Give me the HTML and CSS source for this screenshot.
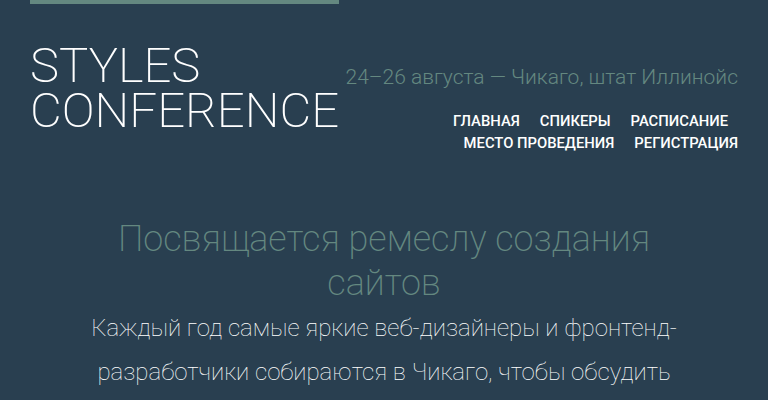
FILE: index.html
```html
<!DOCTYPE html>
<html lang="ru">
<head>
<meta charset="utf-8">
<title>Styles Conference</title>
<link rel="stylesheet" href="styles.css">
</head>
<body>
<header class="primary-header">
  <div class="container header-row">
    <h1 class="logo">STYLES<br>CONFERENCE</h1>
    <div class="header-right">
      <h3 class="tagline">24–26 августа — Чикаго, штат Иллинойс</h3>
      <nav class="nav">
        <ul class="nav-list">
          <li><a href="#">ГЛАВНАЯ</a></li>
          <li><a href="#">СПИКЕРЫ</a></li>
          <li><a href="#">РАСПИСАНИЕ</a></li>
          <li><a href="#">МЕСТО ПРОВЕДЕНИЯ</a></li>
          <li><a href="#">РЕГИСТРАЦИЯ</a></li>
        </ul>
      </nav>
    </div>
  </div>
</header>
<section class="hero">
  <div class="container">
    <h2 class="hero-title">Посвящается ремеслу создания сайтов</h2>
    <p class="hero-lead">Каждый год самые яркие веб-дизайнеры и фронтенд-разработчики собираются в Чикаго, чтобы обсудить</p>
  </div>
</section>
</body>
</html>
```
FILE: styles.css
```css
html, body {
  margin: 0;
  padding: 0;
}
body {
  background: #293f50;
  color: #888;
  font-family: Roboto, "Noto Sans", sans-serif;
  font-weight: 300;
}
.container {
  padding: 0 30px;
}
.header-row {
  display: flex;
  justify-content: space-between;
  align-items: flex-start;
}
.logo {
  margin: 0;
  border-top: 4px solid #648880;
  padding-top: 39px;
  color: #fff;
  font-size: 49px;
  line-height: 45px;
  font-weight: 200;
}
.header-right {
  padding-top: 66px;
  text-align: right;
}
.tagline {
  margin: 0;
  color: #648880;
  font-size: 21px;
  line-height: 22px;
  font-weight: 300;
}
.nav-list {
  list-style: none;
  margin: 22px 0 0 0;
  padding: 0;
  font-size: 0;
}
.nav-list li {
  display: inline-block;
  margin: 0 10px;
  font-size: 14.8px;
  line-height: 22px;
  font-weight: 500;
}
.nav-list li:last-child {
  margin-right: 0;
}
.nav-list a {
  color: #fff;
  text-decoration: none;
}
.hero {
  text-align: center;
  padding-top: 63px;
}
.hero-title {
  margin: 0;
  padding: 0 50px;
  color: #648880;
  font-size: 36px;
  line-height: 44px;
  font-weight: 200;
}
.hero-lead {
  margin: 1px 0 0 0;
  padding: 0 50px;
  color: #fff;
  font-size: 24px;
  line-height: 44px;
  font-weight: 250;
}
```
